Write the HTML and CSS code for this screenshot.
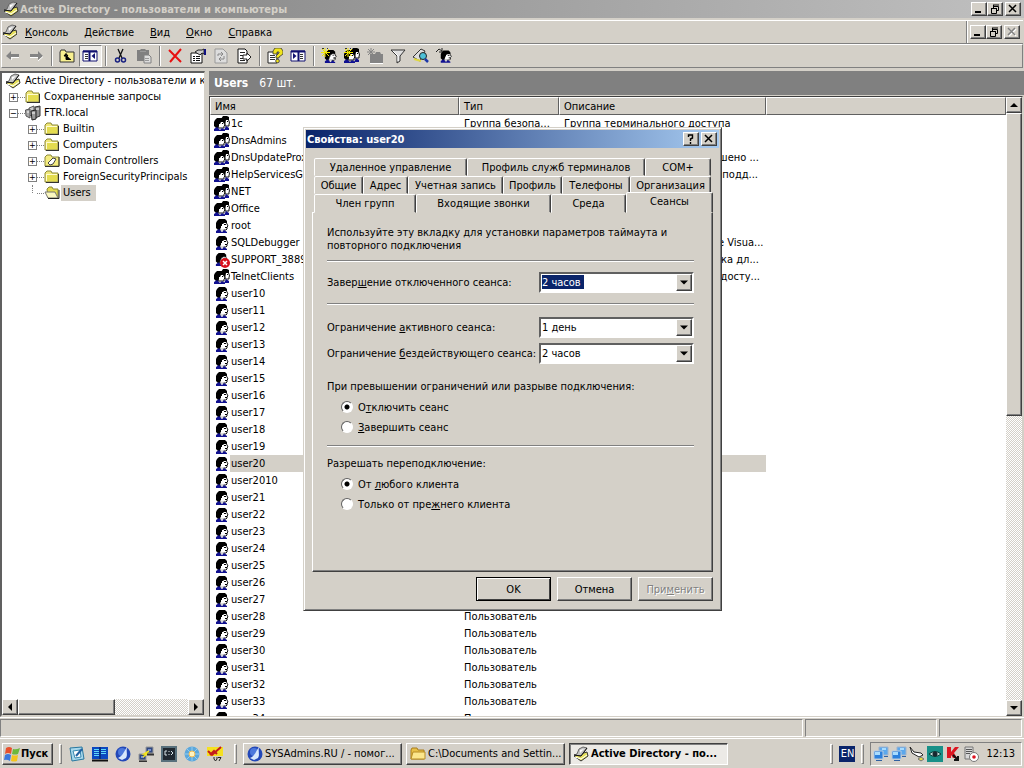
FILE: index.html
```html
<!DOCTYPE html>
<html lang="ru">
<head>
 <meta charset="utf-8">
 <title>Active Directory - пользователи и компьютеры</title>
 <link rel="stylesheet" href="styles.css">
</head>
<body>
<!-- icon set -->
<svg class="defs" width="0" height="0">
  <symbol id="console" viewBox="0 0 16 16">
    <path d="M1 10L8 15L15 10L14 6L7 8Z" fill="#e6e05c" stroke="#333"/>
    <path d="M2 11L8 13L14 9" fill="none" stroke="#fff"/>
    <path d="M6 3L10 1L14 2L8 10L1 9L4 8Z" fill="#c4c4c4" stroke="#666"/>
    <path d="M14 2L8 10L1 9" fill="none" stroke="#111"/>
    <path d="M7 4L11 3L7 7Z" fill="#fff"/>
  </symbol>
  <symbol id="folder" viewBox="0 0 16 16">
    <path d="M1 4L3 2H7L8 4H14V13H1Z" fill="#f0e878" stroke="#8c8838"/>
    <path d="M2 6H13V12H2Z" fill="#e4dc50"/>
    <path d="M2 5.500H13M2.500 5V12" stroke="#fffcd0" fill="none"/>
    <path d="M2 13.500H15M14.500 5V14" stroke="#333" fill="none"/>
  </symbol>
  <symbol id="openfolder" viewBox="0 0 16 16">
    <path d="M3 4L5 2H8L9 4H14V13H4Z" fill="#e4dc50" stroke="#8c8838"/>
    <path d="M1 7H11L14 13H4Z" fill="#fbf8c0" stroke="#777"/>
    <path d="M4 13.500H15V5" stroke="#222" fill="none"/>
  </symbol>
  <symbol id="dcfolder" viewBox="0 0 16 16">
    <path d="M1 4L3 2H7L8 4H15V13H1Z" fill="#f4ec80" stroke="#8c8838"/>
    <path d="M4 10L9 5L12 6L9 11L6 12Z" fill="#fff" stroke="#444"/>
    <path d="M1 13.500H15V4" stroke="#333" fill="none"/>
  </symbol>
  <symbol id="domain" viewBox="0 0 16 16">
    <path d="M4 3L9 1V9L4 11Z" fill="#ccc" stroke="#555"/>
    <path d="M10 2L15 1V11L10 13Z" fill="#909090" stroke="#333"/>
    <path d="M0.500 5L5 4V13L1 11Z" fill="#aaa" stroke="#555"/>
    <path d="M6 6L11 5V14L7 15Z" fill="#999" stroke="#222"/>
    <path d="M7 8H10M11 4H14M2 7H4" stroke="#fff"/>
  </symbol>
  <symbol id="user" viewBox="0 0 16 16">
    <path d="M7 4H12L13 6L14 8L13 9V11L12 12H6V7Z" fill="#fff" stroke="#111"/>
    <path d="M2 5L3 3L5 1H11L13 3V5H10L9 6H8V8H7V10H6V12H4L2 10Z" fill="#000"/>
    <path d="M10 6H12V7H10ZM11 9H13V10H11Z" fill="#000"/>
    <path d="M2 15V13L5 11L8 14L10 12L13 14V15Z" fill="#101090"/>
    <path d="M6 11H10L8 14Z" fill="#ddd"/>
  </symbol>
  <symbol id="group" viewBox="0 0 16 16">
    <path d="M11 3H14L15 5L15.500 7L15 8V10H11Z" fill="#fff" stroke="#111"/>
    <path d="M7 3L9 0H13L15 1V4H12L11 7V10H8Z" fill="#000"/>
    <path d="M10 14L12 10L15 12V14Z" fill="#101090"/>
    <path d="M5 5H9L10 7L11 9L10 10V12H4V8Z" fill="#fff" stroke="#111"/>
    <path d="M0 6L1 4L3 2H8L10 4V6H7L6 8H5V10L4 12H2L0 10Z" fill="#000"/>
    <path d="M8 7H9V8H8ZM13 5H14V6H13Z" fill="#000"/>
    <path d="M0 15V13L3 11L6 14L8 12L11 14V15Z" fill="#101090"/>
  </symbol>
  <symbol id="disabled" viewBox="0 0 16 16">
    <use href="#user" width="15" height="15"/>
    <circle cx="11" cy="11" r="5" fill="#d8101c"/>
    <path d="M9 9L13 13M13 9L9 13" stroke="#fff" stroke-width="1.500"/>
  </symbol>
  <symbol id="star" viewBox="0 0 16 16">
    <path d="M4 0V9M0 4.500H9M1 1L8 8M8 1L1 8" stroke="#f4e800" fill="none"/>
    <path d="M1 0.500H3M6 .5H7" stroke="#333" fill="none"/>
  </symbol>
  <symbol id="fox" viewBox="0 0 16 16">
    <circle cx="8" cy="8" r="7.500" fill="#2348b8"/>
    <circle cx="7" cy="6" r="4" fill="#4c78dc"/>
    <path d="M12 1C11 6 13 9 11 12L7 14L3 12C8 10 9 5 12 1Z" fill="#d8e8fc"/>
  </symbol>
  <symbol id="net" viewBox="0 0 16 16">
    <path d="M6 1H15V9H6Z" fill="#5ca8ec" stroke="#a0b4cc"/>
    <path d="M1 5H10V13H1Z" fill="#2c80dc" stroke="#b8cce0"/>
    <path d="M2 6H7V9H2ZM9 2H13V4H9Z" fill="#a8dcff"/>
    <path d="M3 14.500H9M11 10.500H15" stroke="#3060a0"/>
  </symbol>
</svg>

<div class="window">
  <header class="titlebar">
    <svg class="ic"><use href="#console"/></svg>
    <h1>Active Directory - пользователи и компьютеры</h1>
    <div class="winbtns">
      <button class="wb" aria-label="Свернуть"><svg viewBox="0 0 12 10"><path d="M2 8H8" stroke="#000" stroke-width="2"/></svg></button>
      <button class="wb" aria-label="Восстановить"><svg viewBox="0 0 12 10"><path d="M4 1H10M4 2.500H9.500V6.500H7.500M4.500 1V4M2 4.500H8M2.500 5V9.500H7.500V5" fill="none" stroke="#000"/></svg></button>
      <button class="wb closebtn" aria-label="Закрыть"><svg viewBox="0 0 12 10"><path d="M2 1L9 8M9 1L2 8" stroke="#000" stroke-width="1.500"/></svg></button>
    </div>
  </header>

  <nav class="menubar">
    <svg class="ic"><use href="#console"/></svg>
    <button class="menu"><u>К</u>онсоль</button>
    <button class="menu"><u>Д</u>ействие</button>
    <button class="menu"><u>В</u>ид</button>
    <button class="menu"><u>О</u>кно</button>
    <button class="menu"><u>С</u>правка</button>
    <div class="winbtns mdi">
      <button class="wb" aria-label="Свернуть окно"><svg viewBox="0 0 12 10"><path d="M2 8H8" stroke="#000" stroke-width="2"/></svg></button>
      <button class="wb" aria-label="Восстановить окно"><svg viewBox="0 0 12 10"><path d="M4 1H10M4 2.500H9.500V6.500H7.500M4.500 1V4M2 4.500H8M2.500 5V9.500H7.500V5" fill="none" stroke="#000"/></svg></button>
      <button class="wb closebtn" disabled aria-label="Закрыть окно"><svg viewBox="0 0 12 10"><path d="M3 2L10 9M10 2L3 9" stroke="#fff" stroke-width="1.500"/><path d="M2 1L9 8M9 1L2 8" stroke="#808080" stroke-width="1.500"/></svg></button>
    </div>
  </nav>

  <div class="toolbar">
    <button class="tb" aria-label="Назад"><svg class="ic" viewBox="0 0 16 16"><path d="M1 8L6 3V6H14V9H6V12Z" fill="#848484"/><path d="M6 9.500H14M6 12L7 10" stroke="#fff"/></svg></button>
    <button class="tb" aria-label="Вперед"><svg class="ic" viewBox="0 0 16 16"><path d="M15 8L10 3V6H2V9H10V12Z" fill="#848484"/><path d="M2 9.500H10M10 13L15 8.500" stroke="#fff"/></svg></button>
    <span class="sep"></span>
    <button class="tb" aria-label="Вверх"><svg class="ic" viewBox="0 0 16 16"><path d="M1 4L2 2H6L7 4H15V14H1Z" fill="#f8f090" stroke="#333"/><path d="M5 8L7 5.500L9 8ZM7 7V11.500H12" fill="#000" stroke="#000" /></svg></button>
    <button class="tb pressed" aria-label="Дерево"><svg class="ic" viewBox="0 0 16 16"><path d="M1 3H15V13H1Z" fill="#fff" stroke="#101070"/><path d="M1 3.500H15M7.500 3V13" stroke="#101070" stroke-width="2"/><path d="M3 6.500H6M3 8.500H6M3 10.500H6" stroke="#333"/><path d="M13 5V11L9.500 8Z" fill="#101070"/></svg></button>
    <span class="sep"></span>
    <button class="tb" aria-label="Вырезать"><svg class="ic" viewBox="0 0 16 16"><path d="M5 1L9 10M10 1L6 10" stroke="#111" stroke-width="1.300"/><circle cx="4.500" cy="12" r="2" fill="none" stroke="#182080" stroke-width="1.500"/><circle cx="10.500" cy="12" r="2" fill="none" stroke="#182080" stroke-width="1.500"/></svg></button>
    <button class="tb" aria-label="Вставить"><svg class="ic" viewBox="0 0 16 16"><path d="M1 2H4L5 1H9L10 2H13V13H1Z" fill="#808080"/><path d="M8 7H13L15 9V15H8Z" fill="#ddd" stroke="#808080"/><path d="M9 10.500H13M9 12.500H13M4 3.500H10" stroke="#999"/></svg></button>
    <span class="sep"></span>
    <button class="tb" aria-label="Удалить"><svg class="ic" viewBox="0 0 16 16"><path d="M2 2L14 14M14 1L3 14" stroke="#e81010" stroke-width="2"/></svg></button>
    <button class="tb" aria-label="Свойства"><svg class="ic" viewBox="0 0 16 16"><path d="M1 5H12V15H1Z" fill="#fff" stroke="#111"/><path d="M3 8.500H5M6 8.500H10M3 10.500H5M6 10.500H10M3 12.500H5M6 12.500H10" stroke="#111"/><path d="M5 4L8 2H12L14 1V6L12 5L10 7Z" fill="#ccc" stroke="#222"/><path d="M14 1H16V7H14Z" fill="#101080"/></svg></button>
    <button class="tb" aria-label="Обновить"><svg class="ic" viewBox="0 0 16 16"><path d="M2 1H10L14 5V15H2Z" fill="#ddd" stroke="#999"/><path d="M5 8V6H9M8 4L10 6L8 8M11 8V11H6M8 9L6 11L8 13" fill="none" stroke="#888"/></svg></button>
    <button class="tb" aria-label="Экспорт"><svg class="ic" viewBox="0 0 16 16"><path d="M2 1H9L11 3V15H2Z" fill="#fff" stroke="#111"/><path d="M4 4.500H9M4 7.500H8M4 10.500H8M4 12.500H9" stroke="#222"/><path d="M7 7H11V5L15 9L11 13V11H7Z" fill="#fff" stroke="#222"/></svg></button>
    <span class="sep"></span>
    <button class="tb" aria-label="Справка"><svg class="ic" viewBox="0 0 16 16"><path d="M1 4H10V15H1Z" fill="#fff" stroke="#222"/><path d="M3 7.500H8M3 9.500H8M3 11.500H8" stroke="#333"/><path d="M6 5V3L8 0H14L16 3V6L12 9V10H9V8L12 5V4H10V6H6Z" fill="#f0e41c" stroke="#333" stroke-width=".8"/><circle cx="10.500" cy="13" r="1.800" fill="#f0e41c" stroke="#333" stroke-width=".8"/></svg></button>
    <button class="tb" aria-label="Панель действий"><svg class="ic" viewBox="0 0 16 16"><path d="M1 3H15V13H1Z" fill="#fff" stroke="#101070"/><path d="M1 3.500H15M8.500 3V13" stroke="#101070" stroke-width="2"/><path d="M10 6.500H13M10 8.500H13M10 10.500H13" stroke="#333"/><path d="M3 5V11L6.500 8Z" fill="#101070"/></svg></button>
    <span class="sep"></span>
    <button class="tb" aria-label="Новый пользователь"><svg class="ic" viewBox="0 0 16 16"><use href="#user" x="2" y="1" width="15" height="15"/><use href="#star" width="16" height="16"/></svg></button>
    <button class="tb" aria-label="Новая группа"><svg class="ic" viewBox="0 0 16 16"><use href="#group" width="16" height="16"/><use href="#star" width="16" height="16"/></svg></button>
    <button class="tb" aria-label="Новое подразделение"><svg class="ic" viewBox="0 0 16 16"><path d="M3 6H8L9 4H13L14 6H16V15H3Z" fill="#848484"/><path d="M4 0V8M0 4H8M1 1L7 7M7 1L1 7" stroke="#848484"/><path d="M3 15.500H16" stroke="#fff"/></svg></button>
    <button class="tb" aria-label="Фильтр"><svg class="ic" viewBox="0 0 16 16"><path d="M1 2H15L10 8V13L7 15V8Z" fill="#e0e0e0" stroke="#333"/><path d="M3 3L8 8V13" stroke="#fff" fill="none"/></svg></button>
    <button class="tb" aria-label="Найти"><svg class="ic" viewBox="0 0 16 16"><path d="M0 9L8 1L12 3L7 13Z" fill="#ddd" stroke="#333"/><path d="M1 11L8 13" stroke="#e0d840" stroke-width="2"/><circle cx="10" cy="8" r="3.500" fill="#4cc0d8" stroke="#222"/><path d="M12 11L15 14" stroke="#1c38a8" stroke-width="2.500"/></svg></button>
    <button class="tb" aria-label="Добавить в группу"><svg class="ic" viewBox="0 0 16 16"><use href="#user" x="3" y="1" width="14" height="15"/><path d="M0 4L3 1L6 3M6 0V4H3" stroke="#222" fill="none"/></svg></button>
  </div>

  <main class="panes">
    <section class="treepane">
      <ul class="tree">
        <li><svg class="ic"><use href="#console"/></svg><span class="node">Active Directory - пользователи и компьютеры</span></li>
        <li class="l1"><span class="box">+</span><i></i><svg class="ic"><use href="#folder"/></svg><span class="node">Сохраненные запросы</span></li>
        <li class="l1"><span class="box">−</span><i></i><svg class="ic"><use href="#domain"/></svg><span class="node">FTR.local</span></li>
        <li class="l2"><span class="box">+</span><i></i><svg class="ic"><use href="#folder"/></svg><span class="node">Builtin</span></li>
        <li class="l2"><span class="box">+</span><i></i><svg class="ic"><use href="#folder"/></svg><span class="node">Computers</span></li>
        <li class="l2"><span class="box">+</span><i></i><svg class="ic"><use href="#dcfolder"/></svg><span class="node">Domain Controllers</span></li>
        <li class="l2"><span class="box">+</span><i></i><svg class="ic"><use href="#folder"/></svg><span class="node">ForeignSecurityPrincipals</span></li>
        <li class="l2"><span class="corner"></span><i></i><svg class="ic"><use href="#openfolder"/></svg><span class="node current">Users</span></li>
      </ul>
      <div class="hscroll">
        <button class="arrow" aria-label="Влево"><svg viewBox="0 0 8 8"><path d="M6 0V8L2 4Z"/></svg></button>
        <span class="thumb"></span>
        <button class="arrow" aria-label="Вправо"><svg viewBox="0 0 8 8"><path d="M2 0V8L6 4Z"/></svg></button>
      </div>
    </section>

    <section class="listpane">
      <div class="caption"><b>Users</b><span>67 шт.</span></div>
      <div class="listbox">
        <div class="tablewrap">
        <table class="list">
          <colgroup><col class="cname"><col class="ctype"><col class="cdesc"><col></colgroup>
          <thead><tr><th>Имя</th><th>Тип</th><th>Описание</th><th></th></tr></thead>
          <tbody>
            <tr><td><svg class="ic"><use href="#group"/></svg>1c</td><td>Группа безопа...</td><td>Группа терминального доступа</td><td></td></tr>
            <tr><td><svg class="ic"><use href="#group"/></svg>DnsAdmins</td><td>Группа безопа...</td><td></td><td></td></tr>
            <tr><td><svg class="ic"><use href="#group"/></svg>DnsUpdateProxy</td><td>Группа безопа...</td><td>DNS-клиенты, которым разрешено ...</td><td></td></tr>
            <tr><td><svg class="ic"><use href="#group"/></svg>HelpServicesGroup</td><td>Группа безопа...</td><td>Группа для центра справки и подд...</td><td></td></tr>
            <tr><td><svg class="ic"><use href="#group"/></svg>NET</td><td>Группа безопа...</td><td></td><td></td></tr>
            <tr><td><svg class="ic"><use href="#group"/></svg>Office</td><td>Группа безопа...</td><td></td><td></td></tr>
            <tr><td><svg class="ic"><use href="#user"/></svg>root</td><td>Пользователь</td><td></td><td></td></tr>
            <tr><td><svg class="ic"><use href="#user"/></svg>SQLDebugger</td><td>Пользователь</td><td>This user account is used by the Visua...</td><td></td></tr>
            <tr><td><svg class="ic"><use href="#disabled"/></svg>SUPPORT_388945a0</td><td>Пользователь</td><td>Это учетная запись поставщика дл...</td><td></td></tr>
            <tr><td><svg class="ic"><use href="#group"/></svg>TelnetClients</td><td>Группа безопа...</td><td>Члены данной группы имеют досту...</td><td></td></tr>
            <tr><td><svg class="ic"><use href="#user"/></svg>user10</td><td>Пользователь</td><td></td><td></td></tr>
            <tr><td><svg class="ic"><use href="#user"/></svg>user11</td><td>Пользователь</td><td></td><td></td></tr>
            <tr><td><svg class="ic"><use href="#user"/></svg>user12</td><td>Пользователь</td><td></td><td></td></tr>
            <tr><td><svg class="ic"><use href="#user"/></svg>user13</td><td>Пользователь</td><td></td><td></td></tr>
            <tr><td><svg class="ic"><use href="#user"/></svg>user14</td><td>Пользователь</td><td></td><td></td></tr>
            <tr><td><svg class="ic"><use href="#user"/></svg>user15</td><td>Пользователь</td><td></td><td></td></tr>
            <tr><td><svg class="ic"><use href="#user"/></svg>user16</td><td>Пользователь</td><td></td><td></td></tr>
            <tr><td><svg class="ic"><use href="#user"/></svg>user17</td><td>Пользователь</td><td></td><td></td></tr>
            <tr><td><svg class="ic"><use href="#user"/></svg>user18</td><td>Пользователь</td><td></td><td></td></tr>
            <tr><td><svg class="ic"><use href="#user"/></svg>user19</td><td>Пользователь</td><td></td><td></td></tr>
            <tr class="selected"><td><svg class="ic"><use href="#user"/></svg><span>user20</span></td><td>Пользователь</td><td></td><td></td></tr>
            <tr><td><svg class="ic"><use href="#user"/></svg>user2010</td><td>Пользователь</td><td></td><td></td></tr>
            <tr><td><svg class="ic"><use href="#user"/></svg>user21</td><td>Пользователь</td><td></td><td></td></tr>
            <tr><td><svg class="ic"><use href="#user"/></svg>user22</td><td>Пользователь</td><td></td><td></td></tr>
            <tr><td><svg class="ic"><use href="#user"/></svg>user23</td><td>Пользователь</td><td></td><td></td></tr>
            <tr><td><svg class="ic"><use href="#user"/></svg>user24</td><td>Пользователь</td><td></td><td></td></tr>
            <tr><td><svg class="ic"><use href="#user"/></svg>user25</td><td>Пользователь</td><td></td><td></td></tr>
            <tr><td><svg class="ic"><use href="#user"/></svg>user26</td><td>Пользователь</td><td></td><td></td></tr>
            <tr><td><svg class="ic"><use href="#user"/></svg>user27</td><td>Пользователь</td><td></td><td></td></tr>
            <tr><td><svg class="ic"><use href="#user"/></svg>user28</td><td>Пользователь</td><td></td><td></td></tr>
            <tr><td><svg class="ic"><use href="#user"/></svg>user29</td><td>Пользователь</td><td></td><td></td></tr>
            <tr><td><svg class="ic"><use href="#user"/></svg>user30</td><td>Пользователь</td><td></td><td></td></tr>
            <tr><td><svg class="ic"><use href="#user"/></svg>user31</td><td>Пользователь</td><td></td><td></td></tr>
            <tr><td><svg class="ic"><use href="#user"/></svg>user32</td><td>Пользователь</td><td></td><td></td></tr>
            <tr><td><svg class="ic"><use href="#user"/></svg>user33</td><td>Пользователь</td><td></td><td></td></tr>
            <tr><td><svg class="ic"><use href="#user"/></svg>user34</td><td>Пользователь</td><td></td><td></td></tr>
          </tbody>
        </table>
        </div>
        <div class="vscroll">
          <button class="arrow" aria-label="Вверх"><svg viewBox="0 0 8 8"><path d="M0 6H8L4 2Z"/></svg></button>
          <span class="thumb"></span>
          <button class="arrow" aria-label="Вниз"><svg viewBox="0 0 8 8"><path d="M0 2H8L4 6Z"/></svg></button>
        </div>
      </div>
    </section>
  </main>

  <div class="statusbar"><span></span><span></span><span></span></div>
</div>

<footer class="taskbar">
  <button class="start"><svg class="ic" viewBox="0 0 16 16"><path d="M2 2Q5 0 8 2L7 8Q4 6 1 8Z" fill="#e8502c"/><path d="M9 3Q12 4 16 2L14 8Q11 9 8 8Z" fill="#6cb83c"/><path d="M1 9Q4 7 7 9L6 15Q3 13 0 14Z" fill="#3c78dc"/><path d="M8 9Q11 10 14 9L13 15Q10 16 7 15Z" fill="#f4c41c"/></svg>Пуск</button>
  <span class="grip"></span>
  <div class="quick">
    <a href="#" aria-label="Рабочий стол"><svg class="ic" viewBox="0 0 16 16"><path d="M1 2L13 1L15 13L3 15Z" fill="#a8d8ec" stroke="#2878a0"/><path d="M4 5L11 4L12 11L6 12Z" fill="#fff" stroke="#3888b0"/><path d="M7 10L13 3" stroke="#2060a0" stroke-width="2"/></svg></a>
    <a href="#" aria-label="Менеджер файлов"><svg class="ic" viewBox="0 0 16 16"><path d="M0 1H16V13H0Z" fill="#0c48c0"/><path d="M2 3.500H7M2 5.500H7M2 7.500H7M2 9.500H7M9 3.500H14M9 5.500H14M9 7.500H14" stroke="#60d8f8"/><path d="M0 14.500H16" stroke="#111" stroke-width="2"/><path d="M8 1V13" stroke="#021848"/></svg></a>
    <a href="#" aria-label="SeaMonkey"><svg class="ic"><use href="#fox"/></svg></a>
    <a href="#" aria-label="PuTTY"><svg class="ic" viewBox="0 0 16 16"><path d="M8 1H15V7H8ZM1 8H8V14H1Z" fill="#304880" stroke="#999"/><path d="M10 3H13V5H10ZM3 10H6V12H3Z" fill="#7890d0"/><path d="M11 5L6 8H9L5 11" stroke="#f4e41c" stroke-width="1.500" fill="none"/><path d="M9 8.500H16M1 15.500H9" stroke="#333" stroke-width="2"/></svg></a>
    <a href="#" aria-label="Командная строка"><svg class="ic" viewBox="0 0 16 16"><path d="M1 1H15V15H1Z" fill="#202830" stroke="#58707c" stroke-width="2"/><path d="M6 5H4V9H6M8 5V6M8 8V9M10 5L12 7L10 9" stroke="#d8e4e8" fill="none"/></svg></a>
    <a href="#" aria-label="Обозреватель"><svg class="ic" viewBox="0 0 16 16"><circle cx="8" cy="8" r="7.500" fill="#5ca8dc"/><path d="M8 1V15M1 8H15M3 3L13 13M13 3L3 13" stroke="#94ccf0"/><circle cx="8" cy="8" r="3" fill="#fff4c0" stroke="#f0b850"/></svg></a>
    <a href="#" aria-label="1С"><svg class="ic" viewBox="0 0 16 16"><path d="M0 1H16V10H0Z" fill="#f4e020"/><path d="M1 5L5 9L14 1M3 9L7 5L10 8" stroke="#c41c1c" stroke-width="2" fill="none"/><path d="M7 11V13L8.500 15L10 13V11M11 11.500H14L12 15" stroke="#222" fill="none"/></svg></a>
  </div>
  <span class="grip"></span>
  <div class="tasks">
    <button class="task"><svg class="ic"><use href="#fox"/></svg><span>SYSAdmins.RU / - помог...</span></button>
    <button class="task"><svg class="ic" viewBox="0 0 16 16"><path d="M1 4L2 2H7L8 4H14V13H1Z" fill="#e8c048" stroke="#a87c1c"/><path d="M1 13L3 6H15V13Z" fill="#fce68c" stroke="#b88c24"/></svg><span>C:\Documents and Settin...</span></button>
    <button class="task active"><svg class="ic"><use href="#console"/></svg><span>Active Directory - по...</span></button>
  </div>
  <span class="grip"></span>
  <button class="lang">EN</button>
  <span class="grip"></span>
  <div class="tray">
    <svg class="ic"><use href="#net"/></svg>
    <svg class="ic"><use href="#net"/></svg>
    <svg class="ic" viewBox="0 0 16 16"><path d="M1 1L3 7L10 11L14 9L12 7L5 6Z" fill="#fff" stroke="#222"/><path d="M9 13L12 11L15 13L12 15Z" fill="#e8dc40" stroke="#777"/></svg>
    <svg class="ic" viewBox="0 0 16 16"><path d="M0 0H16V16H0Z" fill="#189088"/><path d="M2 8Q8 3 14 8Q8 13 2 8Z" fill="#c0dcd8" stroke="#083c38"/><circle cx="8" cy="8" r="2.500" fill="#182830"/></svg>
    <svg class="ic" viewBox="0 0 16 16"><path d="M2 1H6V6L10 1H14L9 7L12 12H8L6 9V12H2Z" fill="#dc1420"/><path d="M8 9L13 14M13 10V14H9" stroke="#111" stroke-width="2" fill="none"/></svg>
    <svg class="ic" viewBox="0 0 16 16"><path d="M2 1H10V13H2Z" fill="#d8d8d8" stroke="#777"/><path d="M3 3.500H9M3 5.500H9M3 7.500H7" stroke="#555"/><circle cx="11" cy="11" r="4.500" fill="#fff" stroke="#777"/><circle cx="11" cy="11" r="1.800" fill="#dc1420"/></svg>
    <time>12:13</time>
  </div>
</footer>

<!-- user properties -->
<form class="dialog">
  <div class="dlgtitle">
    <h2>Свойства: user20</h2>
    <button type="button" class="wb" aria-label="Справка"><svg viewBox="0 0 12 10"><path d="M3.500 3V1H7.500V4L5.500 5V7M5.500 8V10" fill="none" stroke="#000" stroke-width="1.400"/></svg></button>
    <button type="button" class="wb closebtn" aria-label="Закрыть"><svg viewBox="0 0 12 10"><path d="M2 1L9 8M9 1L2 8" stroke="#000" stroke-width="1.500"/></svg></button>
  </div>
  <div class="tabs">
    <div class="tabrow row1">
      <button type="button" class="tab">Удаленное управление</button>
      <button type="button" class="tab">Профиль служб терминалов</button>
      <button type="button" class="tab">COM+</button>
    </div>
    <div class="tabrow row2">
      <button type="button" class="tab">Общие</button>
      <button type="button" class="tab">Адрес</button>
      <button type="button" class="tab">Учетная запись</button>
      <button type="button" class="tab">Профиль</button>
      <button type="button" class="tab">Телефоны</button>
      <button type="button" class="tab">Организация</button>
    </div>
    <div class="tabrow row3">
      <button type="button" class="tab">Член групп</button>
      <button type="button" class="tab">Входящие звонки</button>
      <button type="button" class="tab">Среда</button>
      <button type="button" class="tab on">Сеансы</button>
    </div>
  </div>
  <div class="tabpage">
    <p>Используйте эту вкладку для установки параметров таймаута и повторного подключения</p>
    <hr>
    <div class="field">
      <label for="enddisc">Завер<u>ш</u>ение отключенного сеанса:</label>
      <span class="combo focused"><select id="enddisc"><option>2 часов</option></select><svg class="drop" viewBox="0 0 8 8"><path d="M0 2H8L4 6Z"/></svg></span>
    </div>
    <hr>
    <div class="field">
      <label for="active">Ограничение <u>а</u>ктивного сеанса:</label>
      <span class="combo"><select id="active"><option>1 день</option></select><svg class="drop" viewBox="0 0 8 8"><path d="M0 2H8L4 6Z"/></svg></span>
    </div>
    <div class="field">
      <label for="idle">Ограничение <u>б</u>ездействующего сеанса:</label>
      <span class="combo"><select id="idle"><option>2 часов</option></select><svg class="drop" viewBox="0 0 8 8"><path d="M0 2H8L4 6Z"/></svg></span>
    </div>
    <fieldset>
      <legend>При превышении ограничений или разрыве подключения:</legend>
      <label class="radio"><input type="radio" name="limit" checked><span>О<u>т</u>ключить сеанс</span></label>
      <label class="radio"><input type="radio" name="limit"><span><u>З</u>авершить сеанс</span></label>
    </fieldset>
    <hr>
    <fieldset>
      <legend>Разрешать переподключение:</legend>
      <label class="radio"><input type="radio" name="reconnect" checked><span>От <u>л</u>юбого клиента</span></label>
      <label class="radio"><input type="radio" name="reconnect"><span>Только от пре<u>ж</u>него клиента</span></label>
    </fieldset>
  </div>
  <div class="dlgbuttons">
    <button type="button" class="btn default">OK</button>
    <button type="button" class="btn">Отмена</button>
    <button type="button" class="btn" disabled>При<u>м</u>енить</button>
  </div>
</form>
</body>
</html>
```
FILE: styles.css
```css
* {
  box-sizing: border-box;
}
body {
  margin: 0;
  height: 100vh;
  display: flex;
  flex-direction: column;
  overflow: hidden;
  background: #d4d0c8;
  color: #000;
  font: 11px/13px "DejaVu Sans Condensed", "DejaVu Sans", sans-serif;
  font-stretch: condensed;
}
button, select, input {
  font: inherit;
  color: inherit;
}
button {
  background: #d4d0c8;
  border: 0;
  padding: 0;
}
h1, h2, p, ul, fieldset {
  margin: 0;
  padding: 0;
  border: 0;
}
svg {
  display: block;
  flex: none;
}
.defs {
  position: absolute;
}
.ic {
  width: 16px;
  height: 16px;
}

/* main window */
.window {
  flex: 1;
  min-height: 0;
  display: flex;
  flex-direction: column;
}
.titlebar {
  display: flex;
  align-items: center;
  height: 18px;
  padding: 0 3px;
  gap: 1px;
  background: linear-gradient(to right, #808080, #c0c0c0);
  color: #d4d0c8;
}
.titlebar h1 {
  flex: 1;
  font-size: 11px;
  font-weight: bold;
}
.winbtns {
  display: flex;
}
.wb {
  width: 16px;
  height: 14px;
  padding: 1px;
  border: 1px solid;
  border-color: #fff #404040 #404040 #fff;
  box-shadow: inset -1px -1px #808080;
}
.wb svg {
  width: 12px;
  height: 10px;
}
.closebtn {
  margin-left: 2px;
}
.menubar {
  display: flex;
  align-items: stretch;
  height: 24px;
  margin: 2px 1px 0;
  border-top: 1px solid #fff;
  border-left: 1px solid #fff;
  border-bottom: 1px solid #808080;
}
.menubar > .ic {
  align-self: center;
  margin-right: -1px;
}
.menu {
  padding: 0 8px;
}
.mdi {
  align-items: center;
  margin-left: auto;
  padding: 0 3px 0 2px;
  border-left: 1px solid #fff;
  box-shadow: -1px 0 #808080;
}
.toolbar {
  display: flex;
  align-items: center;
  height: 24px;
  margin: 0 1px 3px;
  border: 1px solid;
  border-color: #fff #808080 #808080 #fff;
}
.tb {
  width: 23px;
  height: 22px;
  padding: 2px 3px;
}
.pressed {
  border: 1px solid;
  border-color: #808080 #fff #fff #808080;
  padding: 1px 2px;
  background: #eceae6;
}
.sep {
  width: 2px;
  height: 20px;
  margin: 0 3px;
  border-left: 1px solid #808080;
  border-right: 1px solid #fff;
}

.panes {
  flex: 1;
  min-height: 0;
  display: flex;
  gap: 4px;
}
.treepane {
  width: 205px;
  display: flex;
  flex-direction: column;
  justify-content: space-between;
  background: #fff;
  border: 2px solid;
  border-color: #606060 #d4d0c8 #d4d0c8 #606060;
  border-right-width: 1px;
}
.tree {
  list-style: none;
  padding-left: 3px;
  overflow: hidden;
}
.tree li {
  display: flex;
  align-items: center;
  height: 16px;
  white-space: nowrap;
}
.tree .l1 {
  padding-left: 4px;
}
.tree .l2 {
  padding-left: 23px;
}
.tree i {
  width: 7px;
  border-top: 1px dotted #808080;
}
.box {
  width: 9px;
  height: 9px;
  border: 1px solid #808080;
  font-size: 9px;
  line-height: 7px;
  text-align: center;
}
.corner {
  width: 5px;
  height: 8px;
  margin-left: 4px;
  align-self: flex-start;
  border-left: 1px dotted #808080;
}
.node {
  padding: 1px 2px;
  margin-left: 2px;
  line-height: 14px;
}
.l1 .node, .l2 .node {
  margin-left: 1px;
}
.tree .current {
  padding-right: 5px;
  background: #d4d0c8;
}
.hscroll, .vscroll {
  display: flex;
  background: repeating-conic-gradient(#fff 0 25%, #d4d0c8 0 50%) 0 0 / 2px 2px;
}
.arrow {
  width: 16px;
  height: 16px;
  padding: 3px;
  flex: none;
}
.arrow, .thumb, .drop {
  background: #d4d0c8;
  border: 1px solid;
  border-color: #fff #404040 #404040 #fff;
  box-shadow: inset -1px -1px #808080;
}
.arrow svg {
  width: 8px;
  height: 8px;
}
.hscroll .thumb {
  width: 48%;
}
.hscroll .arrow:last-child {
  margin-left: auto;
}
.vscroll {
  flex-direction: column;
  width: 16px;
}
.vscroll .thumb {
  height: 49%;
}
.vscroll .arrow:last-child {
  margin-top: auto;
}

.listpane {
  flex: 1;
  min-width: 0;
  display: flex;
  flex-direction: column;
}
.caption {
  display: flex;
  align-items: center;
  gap: 11px;
  height: 24px;
  padding-left: 5px;
  background: #808080;
  color: #fff;
  font-size: 12px;
}
.listbox {
  flex: 1;
  min-height: 0;
  display: flex;
  margin: 1px 1px 0 0;
  background: #fff;
  border: 1px solid;
  border-color: #404040 #d4d0c8 #d4d0c8 #404040;
}
.tablewrap {
  flex: 1;
  overflow: hidden;
}
.list {
  width: 100%;
  table-layout: fixed;
  border-collapse: separate;
  border-spacing: 0;
}
.cname {
  width: 249px;
}
.ctype {
  width: 100px;
}
.cdesc {
  width: 207px;
}
.list th {
  height: 18px;
  padding: 0 4px;
  background: #d4d0c8;
  border: 1px solid;
  border-color: #fff #606060 #606060 #fff;
  font-weight: normal;
  text-align: left;
}
.list td {
  height: 17px;
  padding: 0 0 0 5px;
  white-space: nowrap;
}
.list td:first-child {
  padding-left: 4px;
}
.list td .ic {
  display: inline-block;
  vertical-align: middle;
  margin-right: 1px;
}
.selected td, .selected span {
  background: #d4d0c8;
}
.list .selected td:first-child {
  background: linear-gradient(to right, #fff 20px, #d4d0c8 20px);
}
.selected td:last-child {
  background: #fff;
}

.statusbar {
  display: flex;
  gap: 2px;
  height: 21px;
  padding: 1px 2px 1px 0;
  border-top: 1px solid #fff;
}
.statusbar span {
  border: 1px solid;
  border-color: #808080 #fff #fff #808080;
  width: 83px;
}
.statusbar span:first-child {
  flex: 1;
}
.statusbar span:nth-child(2) {
  width: 132px;
}

/* taskbar */
.taskbar {
  display: flex;
  align-items: center;
  height: 30px;
  padding: 0 2px;
  border-top: 1px solid #fff;
}
.start, .task {
  display: flex;
  align-items: center;
  gap: 2px;
  height: 22px;
  padding: 0 2px;
  border: 1px solid;
  border-color: #fff #404040 #404040 #fff;
  box-shadow: inset -1px -1px #808080;
  white-space: nowrap;
}
.start {
  width: 51px;
  gap: 1px;
  padding: 0 1px;
  font-weight: bold;
}
.grip {
  width: 3px;
  height: 20px;
  margin: 0 6px;
  border: 1px solid;
  border-color: #fff #808080 #808080 #fff;
}
.quick {
  display: flex;
  gap: 7px;
  padding: 0 5px 0 1px;
}
.tasks {
  flex: 1;
  display: flex;
  gap: 4px;
}
.task {
  width: 159px;
  padding-left: 3px;
}
.active {
  border-color: #404040 #fff #fff #404040;
  box-shadow: inset 1px 1px #808080;
  background: #eceae6;
  font-weight: bold;
}
.lang {
  width: 16px;
  height: 16px;
  background: #0a246a;
  color: #fff;
}
.tray {
  display: flex;
  align-items: center;
  gap: 2px;
  height: 24px;
  padding: 0 6px 0 2px;
  border: 1px solid;
  border-color: #808080 #fff #fff #808080;
}
.tray time {
  margin-left: 5px;
}

/* dialog */
.dialog {
  position: absolute;
  left: 303px;
  top: 127px;
  width: 419px;
  padding: 2px;
  background: #d4d0c8;
  border: 1px solid;
  border-color: #d4d0c8 #404040 #404040 #d4d0c8;
  box-shadow: inset 1px 1px #fff, inset -1px -1px #808080;
}
.dlgtitle {
  display: flex;
  align-items: center;
  height: 18px;
  padding: 0 2px 0 1px;
  background: linear-gradient(to right, #0a246a, #a6caf0);
  color: #fff;
}
.dlgtitle h2 {
  flex: 1;
  font-size: 11px;
}
.dlgtitle .wb {
  color: #000;
}
.tabs {
  padding: 10px 6px 0 8px;
}
.tabrow {
  display: grid;
  height: 18px;
  padding-right: 2px;
}
.row1 {
  grid-template-columns: 153fr 178fr 66fr;
}
.row2 {
  grid-template-columns: 49fr 45fr 95fr 59fr 68fr 81fr;
}
.row3 {
  grid-template-columns: 102fr 135fr 75fr 87fr;
  padding-right: 0;
}
.tab {
  white-space: nowrap;
  border: 1px solid;
  border-color: #fff #404040 transparent #fff;
  border-radius: 2px 2px 0 0;
  box-shadow: inset -1px 0 #808080;
}
.on {
  position: relative;
  height: 21px;
  margin-top: -2px;
  padding-bottom: 3px;
}
.tabpage {
  height: 360px;
  margin: 0 6px;
  padding: 13px 18px 0 14px;
  border: 1px solid;
  border-color: #fff #404040 #404040 #fff;
  box-shadow: inset -1px -1px #808080;
}
hr {
  margin: 8px 0;
  border: 0;
  border-top: 1px solid #808080;
  border-bottom: 1px solid #fff;
}
.field {
  display: flex;
  align-items: center;
  justify-content: space-between;
  margin: 5px 0;
  white-space: nowrap;
}
hr + .field {
  margin-top: 10px;
}
.field + hr {
  margin: 10px 0 12px;
}
.combo {
  position: relative;
  width: 155px;
}
.combo select {
  display: block;
  appearance: none;
  width: 100%;
  height: 21px;
  margin: 0;
  padding: 0 1px;
  background: #fff;
  border: 2px solid;
  border-color: #606060 #fff #fff #606060;
  border-radius: 0;
}
.focused select {
  color: #fff;
  background: linear-gradient(#0a246a, #0a246a) 1px 1px / 42px 14px no-repeat #fff;
}
.focused option {
  color: #000;
}
.drop {
  position: absolute;
  right: 2px;
  top: 2px;
  width: 16px;
  height: 17px;
  padding: 3px;
  pointer-events: none;
}
fieldset {
  margin-top: 16px;
}
hr + fieldset {
  margin-top: 10px;
}
legend {
  padding: 0;
  margin-bottom: 4px;
}
.radio {
  display: flex;
  align-items: center;
  gap: 5px;
  height: 20px;
  padding-left: 14px;
}
.radio input {
  appearance: none;
  width: 12px;
  height: 12px;
  margin: 0;
  border: 1px solid;
  border-color: #606060 #fff #fff #606060;
  border-radius: 50%;
  background: #fff;
}
.radio input:checked {
  background: radial-gradient(circle, #000 2px, #fff 3px);
}
.dlgbuttons {
  display: flex;
  justify-content: flex-end;
  gap: 6px;
  padding: 5px 6px 7px;
}
.btn {
  width: 75px;
  height: 24px;
  border: 1px solid;
  border-color: #fff #404040 #404040 #fff;
  box-shadow: inset -1px -1px #808080;
}
.default {
  border-color: #000;
  box-shadow: inset 1px 1px #fff, inset -1px -1px #404040;
}
.btn:disabled {
  color: #808080;
  text-shadow: 1px 1px #fff;
}
```
